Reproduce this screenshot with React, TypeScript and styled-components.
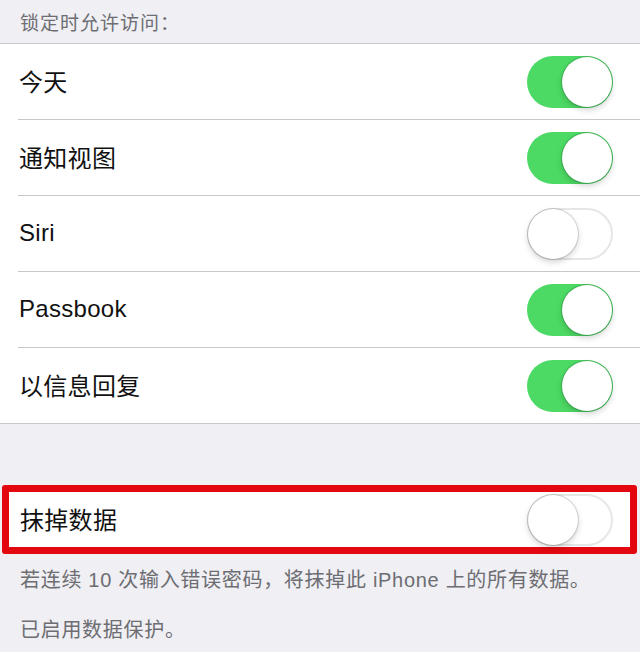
import React from "react";
import styled, { createGlobalStyle } from "styled-components";

const Global = createGlobalStyle`
  html, body { margin: 0; padding: 0; background: #efeff4; }
  body { font-family: "Liberation Sans", "Noto Sans CJK SC", Arial, sans-serif; }
`;

const Page = styled.div`
  width: 640px;
  height: 652px;
  overflow: hidden;
  background: #efeff4;
  display: flex;
  flex-direction: column;
`;

const SectionHeader = styled.div`
  height: 43px;
  padding-left: 20px;
  display: flex;
  align-items: center;
  font-size: 19px;
  color: #6d6d72;
  letter-spacing: 1px;
  margin-top: -6px;
  padding-top: 6px;
  border-bottom: 1px solid #c8c7cc;
`;

const Group = styled.div`
  background: #fff;
  border-bottom: 1px solid #c8c7cc;
  padding-left: 18px;
`;

const Row = styled.div<{ $last?: boolean }>`
  height: 75px;
  display: flex;
  align-items: center;
  justify-content: space-between;
  padding-right: 27px;
  border-bottom: ${(p) => (p.$last ? "none" : "1px solid #c8c7cc")};
`;

const Label = styled.span`
  font-size: 24px;
  color: #111;
  padding-left: 1px;
  letter-spacing: 0.3px;
  margin-top: -2px;
`;

const Spacer = styled.div`
  height: 61px;
`;

const Highlight = styled.div`
  margin: 0 3px 0 2px;
  border: 7px solid #e3080f;
  border-radius: 3px;
  background: #fff;
  height: 55px;
  display: flex;
  align-items: center;
  justify-content: space-between;
  padding-left: 10px;
  padding-right: 17px;
`;

const Track = styled.div<{ $on: boolean }>`
  width: 86px;
  height: 52px;
  border-radius: 26px;
  box-sizing: border-box;
  position: relative;
  background: ${(p) => (p.$on ? "#4cd964" : "#fff")};
  border: ${(p) => (p.$on ? "none" : "2px solid #e6e6e6")};
  flex-shrink: 0;
`;

const Thumb = styled.div<{ $on: boolean }>`
  position: absolute;
  top: ${(p) => (p.$on ? "1px" : "-1px")};
  left: ${(p) => (p.$on ? "35px" : "-1px")};
  width: 50px;
  height: 50px;
  border-radius: 50%;
  background: #fff;
  box-shadow: 0 0 0 1px rgba(0, 0, 0, 0.14), 0 3px 6px rgba(0, 0, 0, 0.18);
`;

const Footer = styled.div`
  padding: 13px 20px 0;
  display: flex;
  flex-direction: column;
  gap: 23px;
  font-size: 20px;
  letter-spacing: 0.7px;
  color: #6d6d72;
  line-height: 27px;
  white-space: nowrap;
`;

const Toggle = ({ on }: { on: boolean }) => (
  <Track $on={on}>
    <Thumb $on={on} />
  </Track>
);

const items: { label: string; on: boolean }[] = [
  { label: "今天", on: true },
  { label: "通知视图", on: true },
  { label: "Siri", on: false },
  { label: "Passbook", on: true },
  { label: "以信息回复", on: true },
];

export default function App() {
  return (
    <Page>
      <Global />
      <SectionHeader>锁定时允许访问：</SectionHeader>
      <Group>
        {items.map((it, i) => (
          <Row key={it.label} $last={i === items.length - 1}>
            <Label>{it.label}</Label>
            <Toggle on={it.on} />
          </Row>
        ))}
      </Group>
      <Spacer />
      <Highlight>
        <Label>抹掉数据</Label>
        <Toggle on={false} />
      </Highlight>
      <Footer>
        <span>若连续 10 次输入错误密码，将抹掉此 iPhone 上的所有数据。</span>
        <span>已启用数据保护。</span>
      </Footer>
    </Page>
  );
}
